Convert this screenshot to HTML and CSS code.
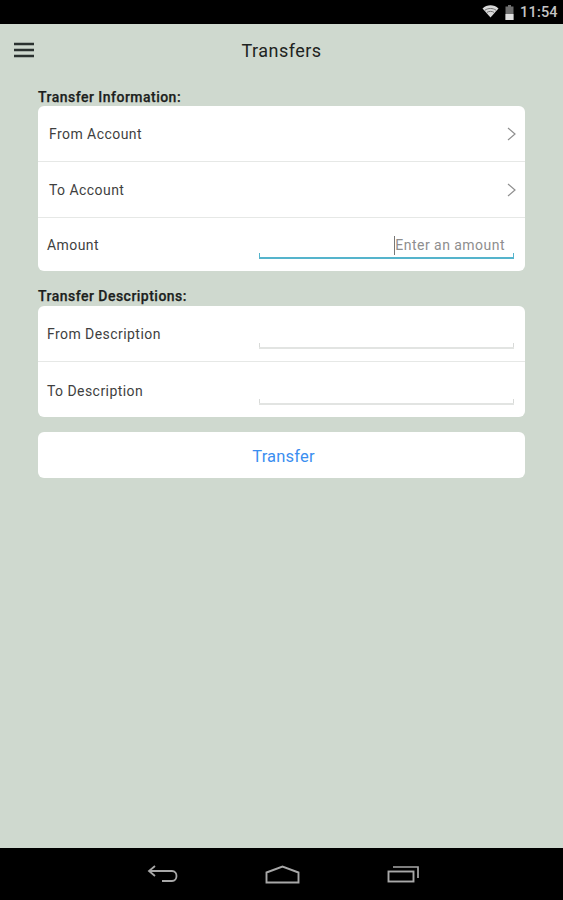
FILE: index.html
```html
<!DOCTYPE html>
<html lang="en">
<head>
<meta charset="utf-8">
<title>Transfers</title>
<link rel="stylesheet" href="styles.css">
</head>
<body>
<div class="screen">
  <div class="statusbar">
    <svg class="wifi" width="17" height="13" viewBox="0 0 17 13"><path d="M0.5 3.5C5 -0.8 12 -0.8 16.5 3.5L8.5 12.5Z" fill="#d8d8d8"/><path d="M3 5.2C6 2.9 11 2.9 14 5.2" stroke="#666" stroke-width="0.9" fill="none"/><path d="M5 7.4C7 6 10 6 12 7.4" stroke="#666" stroke-width="0.9" fill="none"/></svg>
    <svg class="battery" width="9" height="15" viewBox="0 0 9 15"><path d="M3 0H6V1.5H8.5V15H0.5V1.5H3Z" fill="#6e6e6e"/><rect x="0.5" y="9" width="8" height="6" fill="#e0e0e0"/></svg>
    <span class="clock">11:54</span>
  </div>
  <main class="content">
    <header class="titlebar">
      <svg class="menu" width="22" height="16" viewBox="0 0 22 16"><path d="M1 2H21M1 8H21M1 14H21" stroke="#2b3230" stroke-width="2.6" fill="none"/></svg>
      <h1 class="title">Transfers</h1>
    </header>
    <section class="form">
      <h2 class="section-label first">Transfer Information:</h2>
      <div class="card">
        <div class="row nav-row"><span class="row-label">From Account</span><svg class="chev" width="9" height="14" viewBox="0 0 9 14"><path d="M1 1L8 7L1 13" stroke="#8f8f8f" stroke-width="1.2" fill="none"/></svg></div>
        <div class="row nav-row"><span class="row-label">To Account</span><svg class="chev" width="9" height="14" viewBox="0 0 9 14"><path d="M1 1L8 7L1 13" stroke="#8f8f8f" stroke-width="1.2" fill="none"/></svg></div>
        <div class="row input-row short"><span class="row-label">Amount</span>
          <div class="field active"><span class="caret"></span><span class="placeholder">Enter an amount</span></div>
        </div>
      </div>
      <h2 class="section-label">Transfer Descriptions:</h2>
      <div class="card">
        <div class="row input-row"><span class="row-label">From Description</span><div class="field"></div></div>
        <div class="row input-row last"><span class="row-label">To Description</span><div class="field"></div></div>
      </div>
      <button class="transfer" type="button">Transfer</button>
    </section>
  </main>
  <nav class="navbar">
    <svg class="back" width="32" height="20" viewBox="0 0 32 20"><path d="M8 2L2 7L8 12M2 7H25C31 7 31 17 25 17H15" stroke="#a8a8a8" stroke-width="1.8" fill="none"/></svg>
    <svg width="35" height="19" viewBox="0 0 35 19"><path d="M1.5 7.5L17.5 1.5L33.5 7.5V17.5H1.5Z" stroke="#a8a8a8" stroke-width="1.9" fill="none"/></svg>
    <svg width="33" height="18" viewBox="0 0 33 18"><rect x="1.5" y="6.5" width="25" height="10" stroke="#a8a8a8" stroke-width="1.9" fill="none"/><path d="M6 2H31V13" stroke="#a8a8a8" stroke-width="1.7" fill="none"/></svg>
  </nav>
</div>
</body>
</html>
```
FILE: styles.css
```css
* { box-sizing: border-box; }
html, body { margin: 0; padding: 0; }
body { font-family: Roboto, "Liberation Sans", sans-serif; background: #cfd9cf; }
.screen { width: 563px; height: 900px; display: flex; flex-direction: column; overflow: hidden; }
.statusbar { height: 24px; flex: none; background: #000; display: flex; align-items: center; justify-content: flex-end; padding-right: 6px; }
.wifi { margin-right: 6px; margin-top: -1px; }
.battery { margin-right: 6px; }
.clock { color: #c4c4c4; font-size: 14.5px; font-weight: 500; width: 37px; letter-spacing: 0.2px; }
.content { flex: 1; display: flex; flex-direction: column; background: #cfd9cf; }
.titlebar { height: 53px; flex: none; display: flex; align-items: center; justify-content: center; position: relative; }
.menu { position: absolute; left: 13px; top: 18px; }
.title { margin: 0; font-size: 18px; font-weight: 400; color: #1e2321; letter-spacing: 0.48px; }
.form { padding: 0 38px; display: flex; flex-direction: column; }
.section-label { margin: 14px 0 0; font-size: 14px; font-weight: 500; line-height: 16px; color: #1c1f1d; height: 21px; padding-top: 3px; letter-spacing: 0.48px; -webkit-text-stroke: 0.25px #1c1f1d; }
.section-label.first { margin-top: 8px; padding-top: 4px; }
.card { background: #fff; border-radius: 6px; display: flex; flex-direction: column; }
.row { display: flex; align-items: center; justify-content: space-between; height: 56px; border-bottom: 1px solid #e6e8e6; }
.row.last { border-bottom: 0; height: 55px; padding-top: 2px; }
.row.short { border-bottom: 0; height: 53px; }
.nav-row { padding: 0 9px 0 11px; }
.input-row { padding: 0 11px 0 9px; }
.row-label { font-size: 14px; color: #3f3f3f; letter-spacing: 0.44px; }
.field { width: 255px; height: 26px; align-self: flex-start; margin-top: 17px; border-bottom: 2px solid #e2e4e2; display: flex; align-items: center; justify-content: flex-end; position: relative; padding-right: 9px; }
.row.last .field { margin-top: 15px; }
.field::before, .field::after { content: ""; position: absolute; bottom: 0; width: 1px; height: 4px; background: #d8dad8; }
.field::before { left: 0; }
.field::after { right: 0; }
.field.active { border-bottom-color: #55b4cc; margin-top: 15px; }
.field.active::before, .field.active::after { background: #55b4cc; }
.placeholder { font-size: 14px; color: #8e8e8e; letter-spacing: 0.47px; }
.caret { width: 1px; height: 19px; background: #777; }
.transfer { margin-top: 15px; height: 46px; width: 100%; border: 0; border-radius: 6px; background: #fff; color: #3b8ef0; font-family: inherit; font-size: 16.5px; letter-spacing: 0.2px; padding: 2px 0 0 4px; }
.navbar { height: 52px; flex: none; background: #000; display: flex; align-items: center; justify-content: center; gap: 87px; padding-left: 2px; }
.back { margin-left: 1px; margin-right: -1px; }
```
